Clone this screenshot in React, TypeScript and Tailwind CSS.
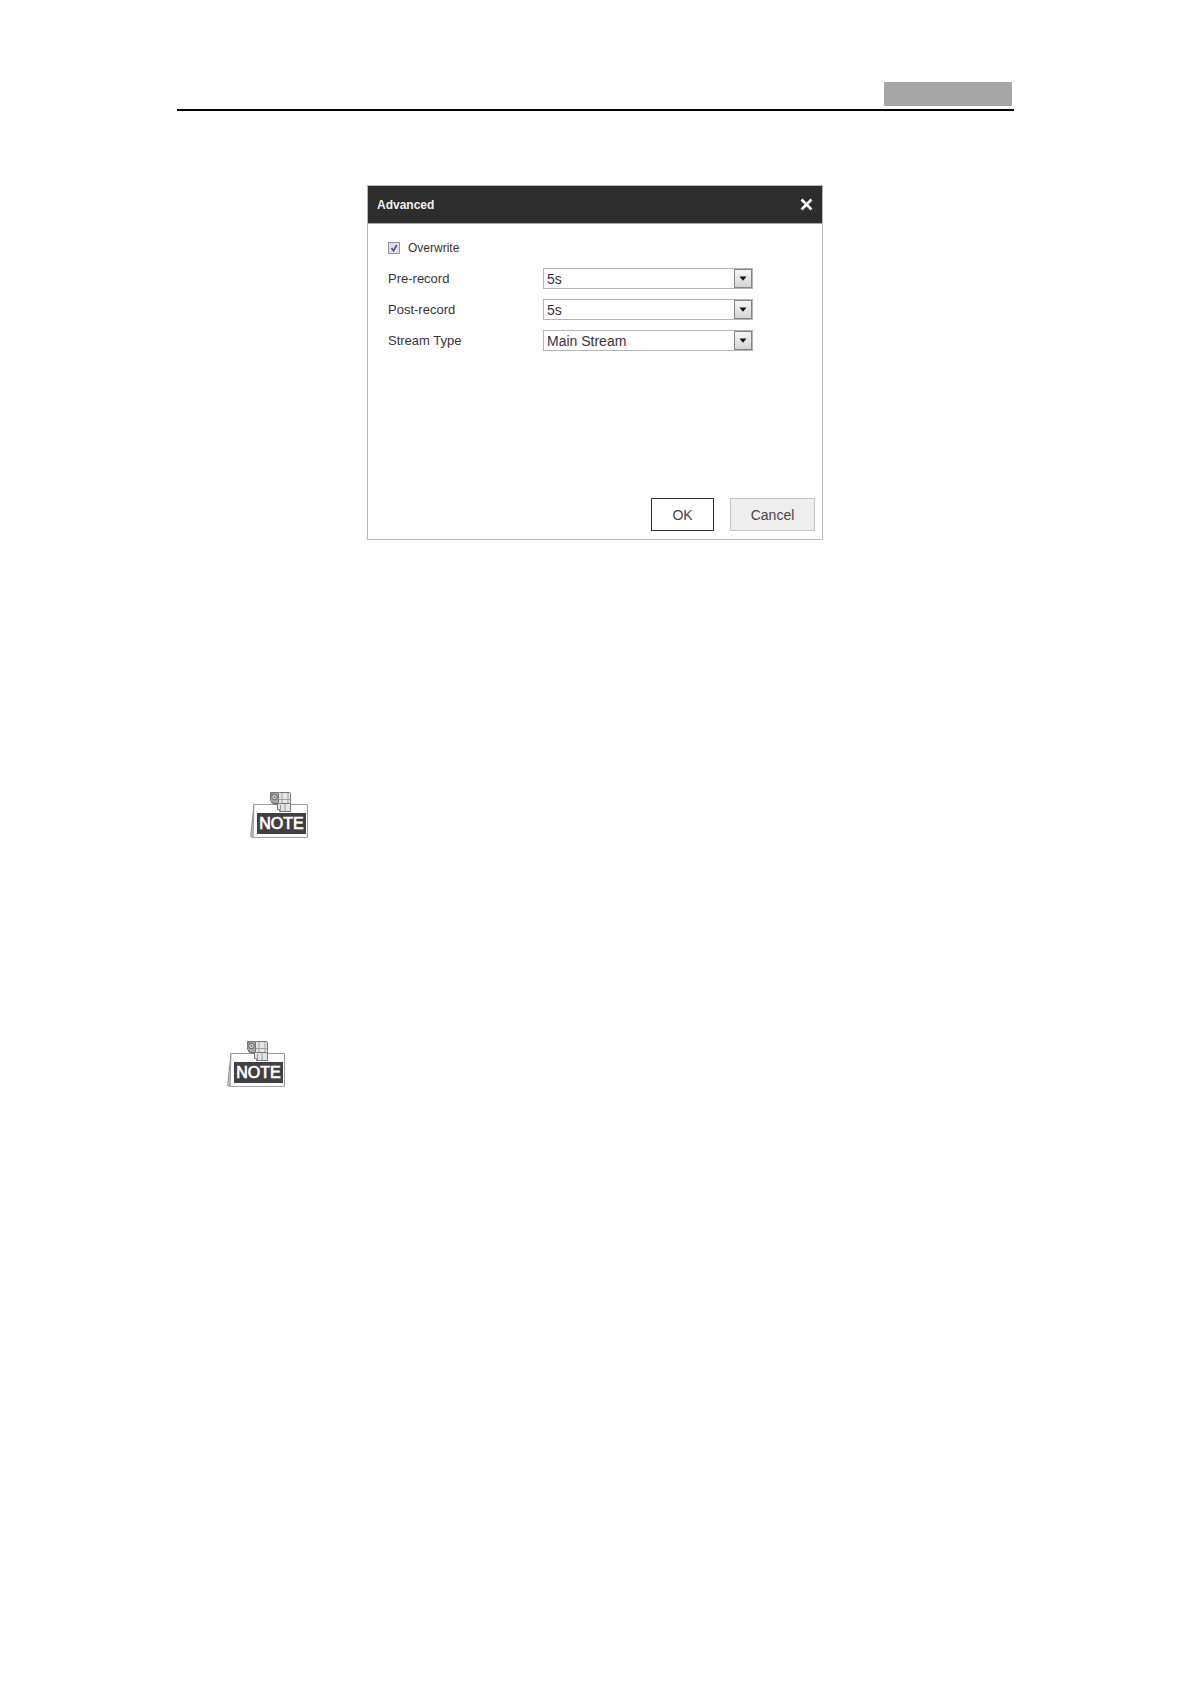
import React from 'react';

type SelectRowProps = {
  id: string;
  label: string;
  options: string[];
};

function SelectRow({ id, label, options }: SelectRowProps) {
  return (
    <div className="flex items-center h-[21px]">
      <label htmlFor={id} className="w-[155px] shrink-0 text-[13px] leading-5 text-[#3a3238]">
        {label}
      </label>
      <div className="relative w-[210px] h-[21px]">
        <select
          id={id}
          className="block w-full h-full appearance-none rounded-none border border-[#b4b4b4] bg-white pl-[3px] pr-5 text-sm leading-4 text-[#3a3238]"
        >
          {options.map((option) => (
            <option key={option}>{option}</option>
          ))}
        </select>
        <span className="pointer-events-none absolute inset-y-px right-px flex w-[18px] items-center justify-center border border-[#858585] bg-linear-to-b from-[#f6f6f6] to-[#d4d4d4]">
          <svg width="8" height="5" viewBox="0 0 8 5" aria-hidden="true">
            <path d="M0.5 0.5h7L4 4.8z" fill="#111" />
          </svg>
        </span>
      </div>
    </div>
  );
}

// Tent card with a small camera clipped on its top edge
function NoteSign() {
  return (
    <svg width="58" height="47" viewBox="0 0 58 47" role="img" aria-label="Note">
      <path d="M4 12.5 0.7 44.5 3 45.5" fill="#ddd" stroke="#8a8a8a" />
      <path d="M4 12.5 3 45.5" fill="none" stroke="#8a8a8a" />
      <path d="M4 12.5h53.5v32.9H3z" fill="#fff" stroke="#9b9b9b" />
      <g stroke="#777" strokeWidth="1">
        <path d="M27.5 11h13v8.5h-11v-2h-2z" fill="#e4e4e4" />
        <path d="M30.5 13v6M35 12v7" fill="none" stroke="#999" />
        <rect x="28.5" y="0.5" width="12" height="11" rx="1" fill="#e6e6e6" />
        <path d="M32 1v10M29 7.5h11M38 1v10" fill="none" stroke="#a0a0a0" />
        <path d="M20.5 0.5h8v11h-5l-3-3z" fill="#a8a8a8" />
        <path d="M21 10.5l6 2M20.5 3l2-2" fill="none" stroke="#666" />
        <circle cx="24.5" cy="5" r="2.8" fill="#ccc" stroke="#666" />
        <circle cx="24.5" cy="5" r="0.8" fill="#555" stroke="none" />
      </g>
      <rect x="7" y="21" width="49" height="21" fill="#404042" />
      <text
        x="31.5"
        y="37"
        textAnchor="middle"
        fill="#fff"
        stroke="#fff"
        className="text-base [stroke-width:0.7px]"
      >
        NOTE
      </text>
    </svg>
  );
}

function AdvancedDialog() {
  return (
    <section role="dialog" aria-labelledby="advanced-title" className="mx-auto w-full max-w-[456px] border border-[#b8b8b8] bg-white">
      <header className="flex h-[38px] items-center justify-between border-b border-[#a8a8a8] bg-[#2d2d2d] pl-[9px] pr-2">
        <h2 id="advanced-title" className="text-xs font-bold text-[#f0f0f0]">
          Advanced
        </h2>
        <button type="button" aria-label="Close" className="p-px">
          <svg width="13" height="13" viewBox="0 0 13 13" aria-hidden="true">
            <path d="M1.5 1.5l10 10M11.5 1.5l-10 10" stroke="#fff" strokeWidth="2.6" />
          </svg>
        </button>
      </header>

      <form className="flex flex-col pt-[13px] pb-2 pl-5 pr-[7px]" onSubmit={(e) => e.preventDefault()}>
        <div className="flex flex-col gap-[10px]">
          <div className="flex h-[21px] items-center">
            <span className="relative flex size-3">
              <input
                id="overwrite"
                type="checkbox"
                defaultChecked
                className="peer size-3 appearance-none border border-[#969696] bg-[#dfdfe6]"
              />
              <svg
                className="pointer-events-none absolute inset-0 hidden peer-checked:block"
                width="12"
                height="12"
                viewBox="0 0 12 12"
                aria-hidden="true"
              >
                <path d="M3.5 6l2 2.8L8.8 3" fill="none" stroke="#4a4a9c" strokeWidth="1.6" />
              </svg>
            </span>
            <label htmlFor="overwrite" className="pl-2 text-xs text-[#3a3238]">
              Overwrite
            </label>
          </div>
          <SelectRow id="pre-record" label="Pre-record" options={['5s']} />
          <SelectRow id="post-record" label="Post-record" options={['5s']} />
          <SelectRow id="stream-type" label="Stream Type" options={['Main Stream']} />
        </div>

        <div className="mt-[147px] flex justify-end gap-4 text-sm text-[#4a4448]">
          <button type="submit" className="h-[33px] w-[63px] border border-[#333] bg-white">
            OK
          </button>
          <button type="button" className="h-[33px] w-[85px] border border-[#c4c4c4] bg-[#eee]">
            Cancel
          </button>
        </div>
      </form>
    </section>
  );
}

export default function App() {
  return (
    <main className="mx-auto w-full max-w-[837px] bg-white pt-[82px] pb-20 font-['Liberation_Sans',Arial,sans-serif]">
      <div className="flex justify-end border-b-2 border-black pb-[3px] pr-[2px]">
        <div className="h-6 w-32 bg-[#a5a5a5]" />
      </div>

      <div className="mt-[74px] pr-px">
        <AdvancedDialog />
      </div>

      <div className="mt-[252px] flex pl-[73px]">
        <NoteSign />
      </div>
      <div className="mt-[202px] flex pl-[50px]">
        <NoteSign />
      </div>
    </main>
  );
}
